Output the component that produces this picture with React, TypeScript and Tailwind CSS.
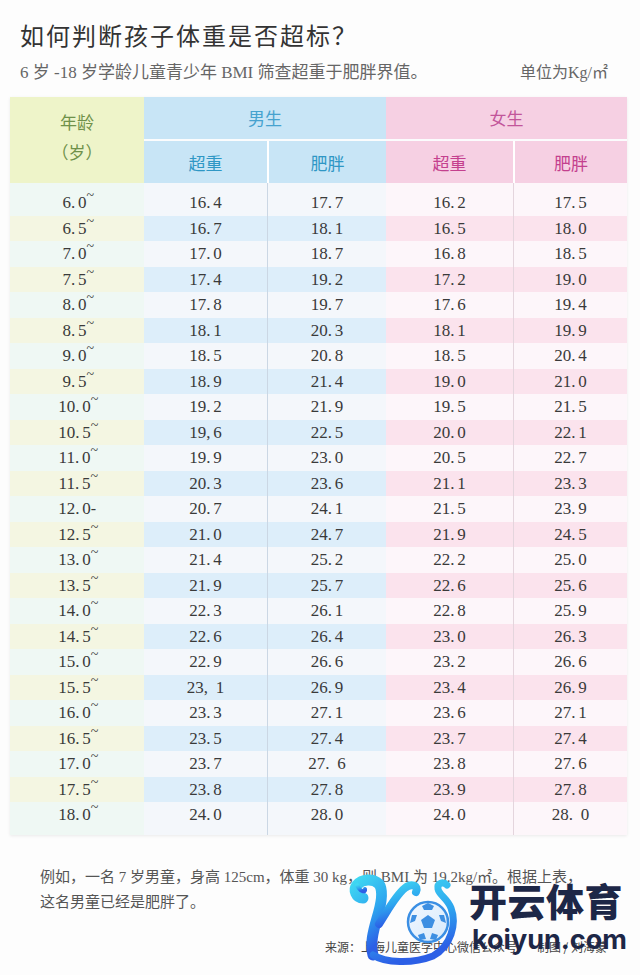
import React from "react";

const ages = ["6.0","6.5","7.0","7.5","8.0","8.5","9.0","9.5","10.0","10.5","11.0","11.5","12.0","12.5","13.0","13.5","14.0","14.5","15.0","15.5","16.0","16.5","17.0","17.5","18.0"];
const boysOver = ["16.4","16.7","17.0","17.4","17.8","18.1","18.5","18.9","19.2","19,6","19.9","20.3","20.7","21.0","21.4","21.9","22.3","22.6","22.9","23, 1","23.3","23.5","23.7","23.8","24.0"];
const boysObese = ["17.7","18.1","18.7","19.2","19.7","20.3","20.8","21.4","21.9","22.5","23.0","23.6","24.1","24.7","25.2","25.7","26.1","26.4","26.6","26.9","27.1","27.4","27. 6","27.8","28.0"];
const girlsOver = ["16.2","16.5","16.8","17.2","17.6","18.1","18.5","19.0","19.5","20.0","20.5","21.1","21.5","21.9","22.2","22.6","22.8","23.0","23.2","23.4","23.6","23.7","23.8","23.9","24.0"];
const girlsObese = ["17.5","18.0","18.5","19.0","19.4","19.9","20.4","21.0","21.5","22.1","22.7","23.3","23.9","24.5","25.0","25.6","25.9","26.3","26.6","26.9","27.1","27.4","27.6","27.8","28. 0"];

const serif = { fontFamily: '"Liberation Serif", "Noto Sans CJK SC", serif' } as React.CSSProperties;

function Num({ v }: { v: string }) {
  const m = v.match(/^(\d+)([.,])(\s?)(\d)$/);
  if (!m) return <span>{v}</span>;
  return (
    <span className="whitespace-nowrap">
      {m[1]}
      <span className={m[3] ? "inline-block w-[12px]" : "inline-block w-[7px]"}>{m[2]}</span>
      {m[4]}
    </span>
  );
}

function AgeLabel({ v }: { v: string }) {
  const [a, b] = v.split(".");
  const dash = v === "12.0";
  return (
    <span className="whitespace-nowrap pl-[4px]">
      {a}
      <span className="inline-block w-[7px]">.</span>
      {b}
      {dash ? (
        <span className="inline-block w-[9px] text-[16px]">-</span>
      ) : (
        <span className="relative -top-[8px] inline-block w-[9px] text-[14px]">~</span>
      )}
    </span>
  );
}

function Logo() {
  return (
    <svg width="120" height="110" viewBox="0 0 120 110" className="absolute left-[343px] top-[858px]">
      <defs>
        <linearGradient id="kg" x1="0" y1="0" x2="0.3" y2="1">
          <stop offset="0" stopColor="#40d8f2" />
          <stop offset="0.55" stopColor="#2ea6ef" />
          <stop offset="1" stopColor="#2c5fe6" />
        </linearGradient>
        <linearGradient id="kb" x1="0" y1="0" x2="1" y2="1">
          <stop offset="0" stopColor="#f2f8ff" />
          <stop offset="1" stopColor="#d6e9fb" />
        </linearGradient>
      </defs>
      <g fill="none" stroke="url(#kg)" strokeLinecap="round">
        <path d="M20 40 C13 40 10 32 14 27 C19 21 30 20 36 26 C41 33 38 47 34 60 C30 74 27 86 30 97" strokeWidth="11" />
        <path d="M30 97 C42 105 70 106 90 98 C108 88 114 66 108 50 C104 40 96 37 95 31 C94 25 100 23 104 27" strokeWidth="7" />
        <path d="M36 66 C44 54 52 38 62 30 C68 25 76 27 73 34" strokeWidth="8" />
        <path d="M14 27 C17 34 23 35 22 31" strokeWidth="4" />
      </g>
      <circle cx="85" cy="64" r="20" fill="url(#kb)" stroke="#3b8fe4" strokeWidth="2.5" />
      <g fill="#3d8fe2">
        <polygon points="85,57 92,62 89,70 81,70 78,62" />
        <polygon points="85,45 91,48 89,52 81,52 79,48" />
        <polygon points="101,57 103,65 98,63 96,57" />
        <polygon points="69,57 74,57 72,63 67,65" />
        <polygon points="75,77 81,75 83,81 77,82" />
        <polygon points="95,77 89,75 87,81 93,82" />
      </g>
    </svg>
  );
}

export default function App() {
  const cjk = { fontFamily: '"Noto Sans CJK SC", sans-serif' } as React.CSSProperties;
  return (
    <div className="relative h-[975px] w-[640px] overflow-hidden bg-[#fdfdfd]" style={cjk}>
      <div className="px-[20px] pt-[19px]">
        <div className="text-[24px] leading-[32px] tracking-[2px] text-[#333]">如何判断孩子体重是否超标？</div>
        <div className="mt-[11px] flex items-center justify-between pr-[12px] text-[17px] leading-[22px] text-[#666]" style={serif}>
          <span>6 岁 -18 岁学龄儿童青少年 BMI 筛查超重于肥胖界值。</span>
          <span className="text-[16px]">单位为Kg/㎡</span>
        </div>
      </div>

      <div className="mx-[10px] mt-[13px] w-[617px] shadow-[0_1px_3px_rgba(0,0,0,0.08)]">
        {/* header */}
        <div className="grid grid-cols-[134px_123px_119px_127px_114px] grid-rows-[42px_2px_42px] text-[17px]">
          <div className="row-span-3 flex flex-col items-center justify-center bg-[#eef4c9] pb-[6px] leading-[30px] text-[#6f9149]">
            <span>年龄</span>
            <span>（岁）</span>
          </div>
          <div className="col-span-2 flex items-center justify-center bg-[#c8e5f6] text-[#46a2cf]">男生</div>
          <div className="col-span-2 flex items-center justify-center bg-[#f6d0e3] text-[#c2559a]">女生</div>
          <div className="col-span-4 bg-[#fbfcfd]"></div>
          <div className="flex items-center justify-center bg-[#c8e5f6] pt-[2px] text-[#2f97c5]">超重</div>
          <div className="flex items-center justify-center border-l-2 border-white bg-[#c8e5f6] pt-[2px] text-[#2f97c5]">肥胖</div>
          <div className="flex items-center justify-center bg-[#f6d0e3] pt-[2px] text-[#c4408e]">超重</div>
          <div className="flex items-center justify-center border-l-2 border-white bg-[#f6d0e3] pt-[2px] text-[#c4408e]">肥胖</div>
        </div>
        {/* body */}
        <div className="text-[17px] text-[#3a3a3a]" style={serif}>
          {ages.map((age, i) => {
            const dark = i % 2 === 1;
            const first = i === 0;
            const last = i === ages.length - 1;
            const pad = first ? "h-[32.5px] pt-[7px]" : last ? "h-[32.5px] pb-[7px]" : "h-[25.5px]";
            return (
              <div key={age} className="grid grid-cols-[134px_123px_119px_127px_114px]">
                <div className={`flex items-center justify-center ${pad} ${dark ? "bg-[#f4f6e2]" : "bg-[#eff8f4]"}`}>
                  <AgeLabel v={age} />
                </div>
                <div className={`flex items-center justify-center ${pad} ${dark ? "bg-[#ddeefa]" : "bg-[#f4f7fb]"}`}>
                  <Num v={boysOver[i]} />
                </div>
                <div className={`flex items-center justify-center border-l border-[#cbd7e4] ${pad} ${dark ? "bg-[#ddeefa]" : "bg-[#f4f7fb]"}`}>
                  <Num v={boysObese[i]} />
                </div>
                <div className={`flex items-center justify-center ${pad} ${dark ? "bg-[#fbe3ed]" : "bg-[#fdf6fa]"}`}>
                  <Num v={girlsOver[i]} />
                </div>
                <div className={`flex items-center justify-center border-l border-[#e4d5dd] ${pad} ${dark ? "bg-[#fbe3ed]" : "bg-[#fdf6fa]"}`}>
                  <Num v={girlsObese[i]} />
                </div>
              </div>
            );
          })}
        </div>
      </div>

      <div className="mt-[30px] px-[40px] text-[15px] leading-[25px] text-[#555]" style={serif}>
        <div className="whitespace-nowrap">例如，一名 7 岁男童，身高 125cm，体重 30 kg，则 BMI 为 19.2kg/㎡。根据上表，</div>
        <div>这名男童已经是肥胖了。</div>
      </div>

      <div className="mt-[24px] flex justify-end pr-[33px] text-[12px] leading-[16px] text-[#444]">
        <span>来源：上海儿童医学中心微信公众号</span>
        <span className="ml-[20px]">制图 / 刘海蒙</span>
      </div>

      {/* watermark overlay */}
      <Logo />
      <div className="absolute left-[469px] top-[881px] text-[38px] font-black leading-none tracking-[0.5px] text-[#1d2747]" style={cjk}>
        开云体育
      </div>
      <div className="absolute left-[472px] top-[926px] text-[27px] font-bold leading-none text-[#1d2747]" style={{ fontFamily: "Inter, sans-serif" }}>
        koiyun.com
      </div>
    </div>
  );
}
